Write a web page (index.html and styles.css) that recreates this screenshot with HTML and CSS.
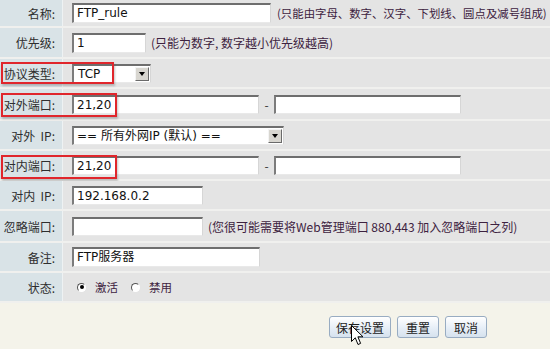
FILE: index.html
```html
<!DOCTYPE html>
<html lang="zh-CN">
<head>
<meta charset="utf-8">
<link rel="stylesheet" href="styles.css">
</head>
<body>
<div class="form">
  <div class="row r-first">
    <div class="label">名称:</div>
    <div class="field"><div class="input w-name">FTP_rule</div><span class="hint hint-tight">(只能由字母、数字、汉字、下划线、圆点及减号组成)</span></div>
  </div>
  <div class="row r-31">
    <div class="label">优先级:</div>
    <div class="field"><div class="input w-prio">1</div><span class="hint">(只能为数字, 数字越小优先级越高)</span></div>
  </div>
  <div class="row">
    <div class="label">协议类型:</div>
    <div class="field"><div class="select w-proto"><span class="sel-text">TCP</span><span class="arrow"></span></div></div>
    <div class="mark mark-proto"></div>
  </div>
  <div class="row r-32">
    <div class="label">对外端口:</div>
    <div class="field"><div class="input w-port">21,20</div><span class="dash">-</span><div class="input w-port"></div></div>
    <div class="mark mark-port"></div>
  </div>
  <div class="row">
    <div class="label">对外&nbsp; IP:</div>
    <div class="field"><div class="select w-ip"><span class="sel-text">== 所有外网IP (默认) ==</span><span class="arrow"></span></div></div>
  </div>
  <div class="row">
    <div class="label">对内端口:</div>
    <div class="field"><div class="input w-port">21,20</div><span class="dash">-</span><div class="input w-port"></div></div>
    <div class="mark mark-port"></div>
  </div>
  <div class="row">
    <div class="label">对内&nbsp; IP:</div>
    <div class="field"><div class="input w-short">192.168.0.2</div></div>
  </div>
  <div class="row r-32">
    <div class="label">忽略端口:</div>
    <div class="field"><div class="input w-short"></div><span class="hint">(您很可能需要将Web管理端口 880,443 加入忽略端口之列)</span></div>
  </div>
  <div class="row">
    <div class="label">备注:</div>
    <div class="field"><div class="input w-note">FTP服务器</div></div>
  </div>
  <div class="row">
    <div class="label">状态:</div>
    <div class="field radios">
      <span class="radio checked"></span><span class="opt">激活</span>
      <span class="radio"></span><span class="opt">禁用</span>
    </div>
  </div>
</div>
<div class="actions">
  <button class="btn btn-wide">保存设置</button>
  <button class="btn">重置</button>
  <button class="btn">取消</button>
  <svg class="cursor" width="13" height="21" viewBox="0 0 13 21"><path d="M0.5 0.5 L0.5 16.5 L4.3 12.8 L7 19.5 L9.6 18.4 L6.9 11.8 L12 11.8 Z" fill="#fff" stroke="#000" stroke-width="1"/></svg>
</div>
</body>
</html>
```

FILE: styles.css
```css
* { box-sizing: border-box; }
html, body { margin: 0; padding: 0; }
body {
  width: 550px;
  height: 349px;
  overflow: hidden;
  background: #f4f3ea;
  font-family: "Noto Sans CJK SC", sans-serif;
  font-size: 12px;
  color: #333;
}
.form { display: flex; flex-direction: column; }
.row {
  position: relative;
  display: grid;
  grid-template-columns: 63px 1fr;
  height: 30px;
  border-bottom: 2px solid #f0f0ee;
}
.r-first { height: 28px; }
.r-31 { height: 31px; }
.r-32 { height: 32px; }
.label {
  background: #d9e3e7;
  border-right: 1px solid #eef2f3;
  display: flex;
  align-items: center;
  justify-content: flex-end;
  padding-right: 7px;
  color: #2e2e2e;
  white-space: nowrap;
}
.field {
  background: #e4e4e4;
  display: flex;
  align-items: center;
  padding-left: 9px;
  white-space: nowrap;
}
.input, .select {
  height: 20px;
  background: #fff;
  border-style: solid;
  border-width: 2px 1px 1px 2px;
  border-color: #6e6e6e #d6d6d6 #e9e9e9 #7c7c7c;
  font-family: "DejaVu Sans", sans-serif;
  font-size: 12px;
  line-height: 17px;
  padding-left: 3px;
  color: #111;
}
.input:first-child { font-family: "DejaVu Sans", "Noto Sans CJK SC", sans-serif; }
.w-name { width: 199px; }
.w-prio { width: 74px; }
.w-port { width: 187px; height: 19px; }
.w-short { width: 131px; height: 19px; }
.w-note { width: 188px; }
.select { display: flex; justify-content: space-between; padding-right: 1px; }
.w-proto { width: 79px; height: 19px; }
.w-ip { width: 212px; height: 19px; }
.sel-text { font-family: "DejaVu Sans", "Noto Sans CJK SC", sans-serif; }
.w-proto .sel-text { padding-left: 1px; }
.arrow {
  width: 14px;
  height: 14px;
  margin-top: 1px;
  background: #d8d6d0;
  border: 1px solid;
  border-color: #f4f4f4 #6a6a6a #6a6a6a #f4f4f4;
  position: relative;
}
.arrow::after {
  content: "";
  position: absolute;
  left: 3px;
  top: 4px;
  border-left: 3.5px solid transparent;
  border-right: 3.5px solid transparent;
  border-top: 4px solid #000;
}
.hint { margin-left: 5px; color: #3d2240; }
.hint-tight { font-size: 11.4px; margin-left: 6px; }
.dash { width: 15px; text-align: center; color: #333; }
.mark {
  position: absolute;
  left: 1px;
  border: 2px solid #e0262c;
  box-shadow: 1px 2px 2px rgba(90, 90, 90, 0.35);
  pointer-events: none;
}
.mark-proto { top: 3px; width: 113px; height: 22px; }
.mark-port { top: 4px; width: 116px; height: 24px; }
.radios { padding-left: 14px; }
.radio {
  width: 9px;
  height: 9px;
  border-radius: 50%;
  border: 1px solid;
  border-color: #555 #fff #fff #555;
  background: #fff;
  position: relative;
}
.radio.checked::after {
  content: "";
  position: absolute;
  left: 1.5px;
  top: 1.5px;
  width: 4px;
  height: 4px;
  border-radius: 50%;
  background: #000;
}
.opt { margin-left: 9px; margin-right: 13px; font-size: 11.5px; color: #3d2240; }
.actions {
  position: relative;
  display: flex;
  gap: 6px;
  padding: 13px 0 0 329px;
}
.btn {
  height: 22px;
  width: 42px;
  padding: 0;
  font-family: "Noto Sans CJK SC", sans-serif;
  font-size: 12px;
  color: #222;
  background: linear-gradient(#ffffff, #e6eef7 55%, #d6e2ee);
  border: 1px solid #98acc2;
  border-radius: 3px;
}
.btn-wide { width: 62px; }
.cursor { position: absolute; left: 351px; top: 22px; }
```
